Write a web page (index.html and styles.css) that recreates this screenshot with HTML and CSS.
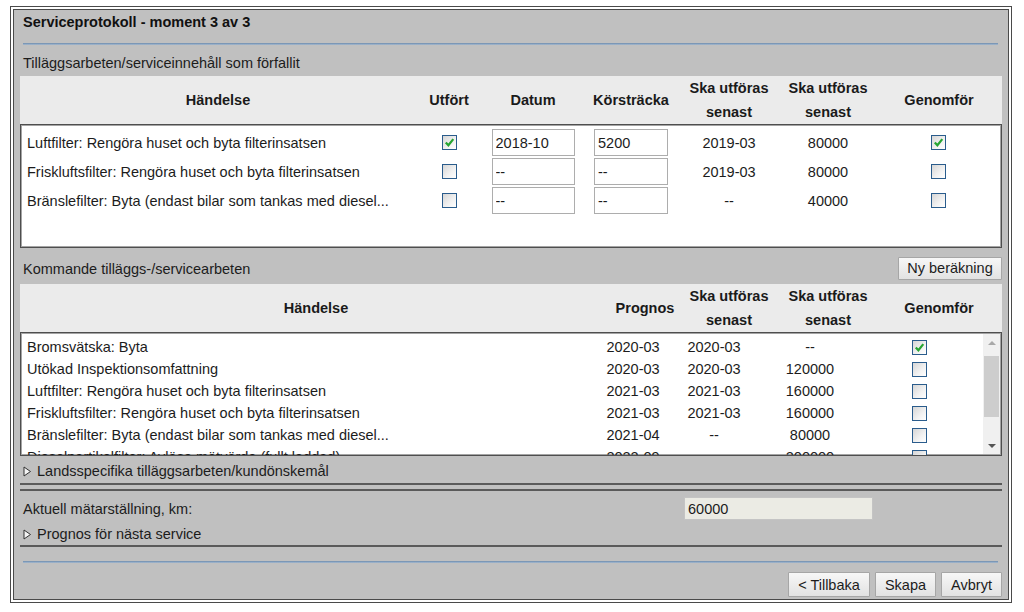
FILE: index.html
```html
<!DOCTYPE html>
<html lang="sv">
<head>
<meta charset="utf-8">
<title>Serviceprotokoll - moment 3 av 3</title>
<link rel="stylesheet" href="styles.css">
</head>
<body>
<div class="frame">
  <div class="panel">
    <div class="title">Serviceprotokoll - moment 3 av 3</div>
    <div class="rule rule-top"></div>
    <div class="section-label">Tilläggsarbeten/serviceinnehåll som förfallit</div>

    <div class="thead cols1">
      <div>Händelse</div>
      <div>Utfört</div>
      <div>Datum</div>
      <div>Körsträcka</div>
      <div>Ska utföras<br>senast</div>
      <div>Ska utföras<br>senast</div>
      <div>Genomför</div>
    </div>
    <div class="tbody tbody1">
      <div class="row1 cols1b">
        <div class="name">Luftfilter: Rengöra huset och byta filterinsatsen</div>
        <div class="c"><span class="cb"><svg viewBox="0 0 13 13" width="13" height="13"><path d="M2.8 6.4l2.6 2.9 4.9-6.2" fill="none" stroke="#27a532" stroke-width="2.2"/></svg></span></div>
        <div class="c"><input class="field f-date" value="2018-10"></div>
        <div class="c"><input class="field f-km" value="5200"></div>
        <div class="c">2019-03</div>
        <div class="c">80000</div>
        <div class="c"><span class="cb"><svg viewBox="0 0 13 13" width="13" height="13"><path d="M2.8 6.4l2.6 2.9 4.9-6.2" fill="none" stroke="#27a532" stroke-width="2.2"/></svg></span></div>
      </div>
      <div class="row1 cols1b">
        <div class="name">Friskluftsfilter: Rengöra huset och byta filterinsatsen</div>
        <div class="c"><span class="cb"></span></div>
        <div class="c"><input class="field f-date" value="--"></div>
        <div class="c"><input class="field f-km" value="--"></div>
        <div class="c">2019-03</div>
        <div class="c">80000</div>
        <div class="c"><span class="cb"></span></div>
      </div>
      <div class="row1 cols1b">
        <div class="name">Bränslefilter: Byta (endast bilar som tankas med diesel...</div>
        <div class="c"><span class="cb"></span></div>
        <div class="c"><input class="field f-date" value="--"></div>
        <div class="c"><input class="field f-km" value="--"></div>
        <div class="c">--</div>
        <div class="c">40000</div>
        <div class="c"><span class="cb"></span></div>
      </div>
    </div>

    <div class="section-bar">
      <div class="section-label-inline">Kommande tilläggs-/servicearbeten</div>
      <button class="btn btn-calc">Ny beräkning</button>
    </div>

    <div class="thead cols2">
      <div>Händelse</div>
      <div>Prognos</div>
      <div>Ska utföras<br>senast</div>
      <div>Ska utföras<br>senast</div>
      <div>Genomför</div>
    </div>
    <div class="tbody tbody2">
      <div class="rows2">
        <div class="row2 cols2b">
          <div class="name">Bromsvätska: Byta</div>
          <div class="c">2020-03</div>
          <div class="c">2020-03</div>
          <div class="c">--</div>
          <div class="c"><span class="cb"><svg viewBox="0 0 13 13" width="13" height="13"><path d="M2.8 6.4l2.6 2.9 4.9-6.2" fill="none" stroke="#27a532" stroke-width="2.2"/></svg></span></div>
        </div>
        <div class="row2 cols2b">
          <div class="name">Utökad Inspektionsomfattning</div>
          <div class="c">2020-03</div>
          <div class="c">2020-03</div>
          <div class="c">120000</div>
          <div class="c"><span class="cb"></span></div>
        </div>
        <div class="row2 cols2b">
          <div class="name">Luftfilter: Rengöra huset och byta filterinsatsen</div>
          <div class="c">2021-03</div>
          <div class="c">2021-03</div>
          <div class="c">160000</div>
          <div class="c"><span class="cb"></span></div>
        </div>
        <div class="row2 cols2b">
          <div class="name">Friskluftsfilter: Rengöra huset och byta filterinsatsen</div>
          <div class="c">2021-03</div>
          <div class="c">2021-03</div>
          <div class="c">160000</div>
          <div class="c"><span class="cb"></span></div>
        </div>
        <div class="row2 cols2b">
          <div class="name">Bränslefilter: Byta (endast bilar som tankas med diesel...</div>
          <div class="c">2021-04</div>
          <div class="c">--</div>
          <div class="c">80000</div>
          <div class="c"><span class="cb"></span></div>
        </div>
        <div class="row2 cols2b">
          <div class="name">Dieselpartikelfilter: Avläsa mätvärde (fullt laddad)</div>
          <div class="c">2022-09</div>
          <div class="c">--</div>
          <div class="c">200000</div>
          <div class="c"><span class="cb"></span></div>
        </div>
      </div>
      <div class="scrollbar">
        <div class="sb-btn"><span class="arrow-up"></span></div>
        <div class="sb-track"><div class="sb-thumb"></div></div>
        <div class="sb-btn"><span class="arrow-down"></span></div>
      </div>
    </div>

    <div class="toggle toggle-country">
      <svg class="tri" viewBox="0 0 9 11" width="9" height="11"><polygon points="1,1 7.5,5.5 1,10" fill="#f4f4f4" stroke="#333" stroke-width="1"/></svg>
      <span>Landsspecifika tilläggsarbeten/kundönskemål</span>
    </div>

    <div class="meter-block">
      <div class="meter-row">
        <div class="meter-label">Aktuell mätarställning, km:</div>
        <input class="field meter-input" value="60000" readonly>
      </div>
      <div class="toggle toggle-forecast">
        <svg class="tri" viewBox="0 0 9 11" width="9" height="11"><polygon points="1,1 7.5,5.5 1,10" fill="#f4f4f4" stroke="#333" stroke-width="1"/></svg>
        <span>Prognos för nästa service</span>
      </div>
    </div>

    <div class="rule rule-bottom"></div>

    <div class="actions">
      <button class="btn btn-back">&lt; Tillbaka</button>
      <button class="btn btn-std">Skapa</button>
      <button class="btn btn-std">Avbryt</button>
    </div>
  </div>
</div>
</body>
</html>
```

FILE: styles.css
```css
* { box-sizing: border-box; }

html, body {
  margin: 0;
  background: #ffffff;
}

body {
  font-family: "Liberation Sans", Arial, sans-serif;
  font-size: 14.5px;
  color: #1c1c1c;
}

.frame {
  margin: 6px 0 0 10px;
  width: 1002px;
  height: 597px;
  border: 1px solid #4a4a4a;
  padding: 2px;
  background: #ffffff;
}

.panel {
  height: 100%;
  border: 1px solid #4a4a4a;
  background: #c0c0c0;
  padding: 3px 6px 0 6px;
  overflow: hidden;
  display: flex;
  flex-direction: column;
}

.title {
  font-weight: bold;
  line-height: 18px;
  padding-left: 3px;
  color: #111;
}

.rule {
  height: 2px;
  background: linear-gradient(#6c8bad, #a9bcd0);
  margin-left: 3px;
  margin-right: 4px;
  flex: none;
}

.rule-top { margin-top: 12px; }
.rule-bottom { margin-top: 14px; }

.section-label {
  margin-top: 9px;
  line-height: 18px;
  padding-left: 3px;
}

.thead {
  margin-top: 4px;
  height: 48px;
  flex: none;
  background: #ebebeb;
  display: grid;
  align-items: center;
  text-align: center;
  font-weight: bold;
  line-height: 24px;
  color: #1a1a1a;
}

.cols1 { grid-template-columns: 396px 66px 102px 94px 102px 96px 1fr; }
.cols2 { grid-template-columns: 592px 66px 102px 96px 1fr; }

.tbody {
  height: 124px;
  flex: none;
  background: #ffffff;
  border: 1px solid #4e4e4e;
  box-shadow: inset 0 0 0 1px #a4a4a4;
}

.tbody1 { padding-top: 3px; }

.row1 {
  height: 29px;
  display: grid;
  align-items: center;
}

.cols1b { grid-template-columns: 395px 66px 102px 94px 102px 96px 1fr; }

.name {
  padding-left: 6px;
  white-space: nowrap;
  overflow: hidden;
}

.c {
  display: flex;
  justify-content: center;
  align-items: center;
  white-space: nowrap;
}

.cb {
  display: inline-block;
  width: 15px;
  height: 15px;
  border: 1px solid #2a5c8c;
  background: linear-gradient(135deg, #d6d6d6 0%, #f2f2f2 60%, #ffffff 100%);
  position: relative;
}

.cb svg {
  position: absolute;
  left: 0;
  top: 0;
}

.field {
  height: 27px;
  border: 1px solid #adadad;
  background: #ffffff;
  padding: 0 3px;
  font-family: "Liberation Sans", Arial, sans-serif;
  font-size: 14.5px;
  color: #1c1c1c;
  outline: none;
  margin: 0;
}

.f-date { width: 83px; }
.f-km { width: 74px; }

.section-bar {
  margin-top: 8px;
  height: 24px;
  display: flex;
  justify-content: space-between;
  align-items: center;
  flex: none;
}

.section-label-inline {
  padding-left: 3px;
  padding-top: 1px;
}

.btn {
  font-family: "Liberation Sans", Arial, sans-serif;
  font-size: 14.5px;
  color: #1c1c1c;
  background: linear-gradient(#f7f7f7, #e2e2e2);
  border: 1px solid #a6a6a6;
  border-radius: 1px;
  padding: 0;
  margin: 0;
}

.btn-calc { width: 104px; height: 23px; }

.tbody2 {
  display: flex;
  overflow: hidden;
}

.rows2 {
  flex: 1;
  overflow: hidden;
  padding-top: 3px;
}

.row2 {
  height: 22px;
  display: grid;
  align-items: center;
}

.cols2b { grid-template-columns: 575px 74px 88px 104px 114px; }

.scrollbar {
  width: 17px;
  margin: 1px 1px 1px 0;
  background: #f0f0f0;
  display: flex;
  flex-direction: column;
  flex: none;
}

.sb-btn {
  height: 17px;
  display: flex;
  justify-content: center;
  align-items: center;
  flex: none;
}

.arrow-up {
  width: 0;
  height: 0;
  border-left: 4px solid transparent;
  border-right: 4px solid transparent;
  border-bottom: 4px solid #a8a8a8;
}

.arrow-down {
  width: 0;
  height: 0;
  border-left: 4px solid transparent;
  border-right: 4px solid transparent;
  border-top: 4px solid #555555;
}

.sb-track {
  flex: 1;
  padding: 5px 1px 0 1px;
}

.sb-thumb {
  height: 61px;
  background: #cdcdcd;
}

.toggle {
  display: flex;
  align-items: center;
  line-height: 20px;
  padding-left: 3px;
}

.tri {
  margin-right: 5px;
  flex: none;
}

.toggle-country {
  padding-top: 5px;
  padding-bottom: 2px;
  border-bottom: 2px solid #5a5a5a;
  flex: none;
}

.meter-block {
  margin-top: 4px;
  border-top: 2px solid #5a5a5a;
  border-bottom: 2px solid #5a5a5a;
  padding: 6px 0 1px 0;
  flex: none;
}

.meter-row {
  display: flex;
  align-items: center;
  height: 23px;
}

.meter-label {
  width: 664px;
  padding-left: 3px;
}

.meter-input {
  width: 189px;
  height: 23px;
  background: #ebebe4;
  border: 1px solid #c4c4c4;
}

.toggle-forecast {
  margin-top: 4px;
}

.actions {
  margin-top: 9px;
  display: flex;
  justify-content: flex-end;
  gap: 5px;
  flex: none;
}

.btn-back { width: 82px; height: 25px; }
.btn-std { width: 61px; height: 25px; }
```
